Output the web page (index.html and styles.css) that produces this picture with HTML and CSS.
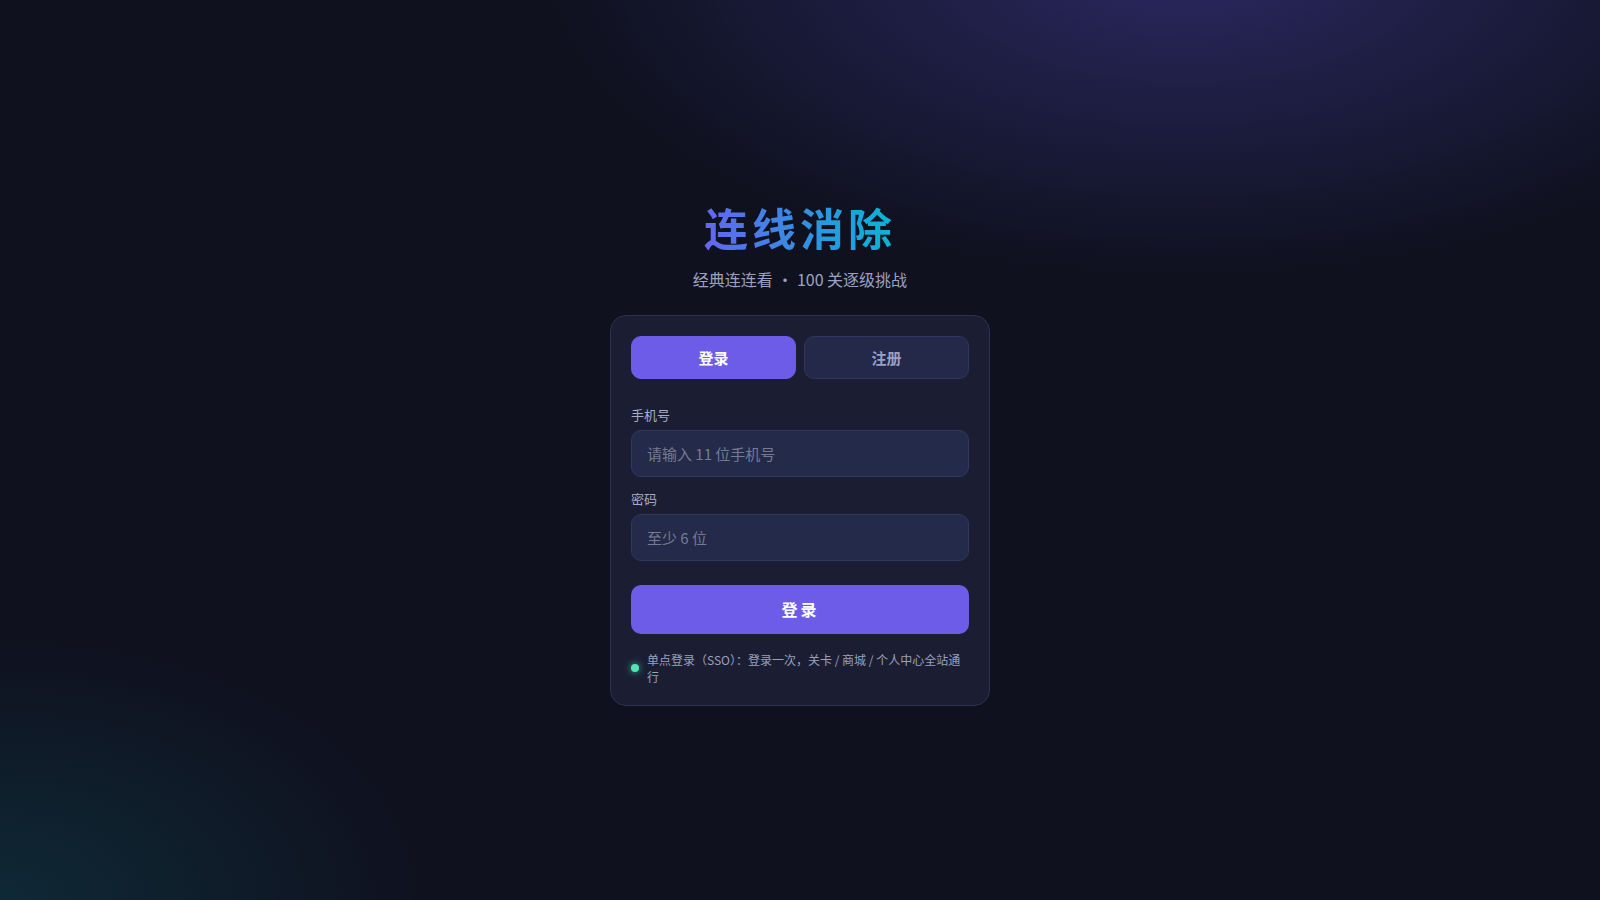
FILE: index.html
```html
<!DOCTYPE html>
<html lang="zh-CN">
<head>
<meta charset="utf-8">
<title>连线消除 - 登录</title>
<link rel="stylesheet" href="styles.css">
</head>
<body>
<main class="page">
  <div class="wrap">
    <h1 class="title">连线消除</h1>
    <p class="subtitle">经典连连看<span class="sep">·</span>100 关逐级挑战</p>
    <section class="card">
      <div class="tabs">
        <button class="tab active">登录</button>
        <button class="tab">注册</button>
      </div>
      <form class="form">
        <label class="field">
          <span class="label">手机号</span>
          <input class="input" type="text" placeholder="请输入 11 位手机号">
        </label>
        <label class="field">
          <span class="label">密码</span>
          <input class="input" type="password" placeholder="至少 6 位">
        </label>
        <button class="submit" type="button">登录</button>
      </form>
      <div class="note">
        <span class="dot"></span>
        <span class="note-text">单点登录（SSO）：登录一次，关卡 / 商城 / 个人中心全站通行</span>
      </div>
    </section>
  </div>
</main>
</body>
</html>
```

FILE: styles.css
```css
* { box-sizing: border-box; }
html, body { margin: 0; padding: 0; }
body {
  font-family: "Noto Sans CJK SC", "Noto Sans", sans-serif;
  background-color: #0f111f;
  background-image:
    radial-gradient(ellipse 640px 320px at 74% -5%, rgba(62, 58, 145, 0.58), rgba(62, 58, 145, 0) 100%),
    radial-gradient(ellipse 420px 260px at 0% 100%, rgba(14, 70, 80, 0.45), rgba(14, 70, 80, 0) 100%);
  color: #e5e7f5;
  min-height: 100vh;
}
.page {
  min-height: 100vh;
  display: flex;
  align-items: center;
  justify-content: center;
}
.wrap {
  display: flex;
  flex-direction: column;
  align-items: center;
  padding-top: 6px;
}
.title {
  margin: 0;
  font-size: 44px;
  line-height: 52px;
  font-weight: 700;
  letter-spacing: 4px;
  background: linear-gradient(90deg, #6366f1 0%, #06b6d4 100%);
  -webkit-background-clip: text;
  background-clip: text;
  color: transparent;
}
.subtitle {
  margin: 14px 0 0;
  font-size: 16px;
  line-height: 24px;
  color: #9ca1c2;
}
.sep { margin: 0 4px; }
.card {
  margin-top: 24px;
  width: 380px;
  padding: 20px;
  background: #1b1e33;
  border: 1px solid #2c3155;
  border-radius: 16px;
}
.tabs {
  display: grid;
  grid-template-columns: 1fr 1fr;
  gap: 8px;
}
.tab {
  height: 43px;
  border-radius: 10px;
  border: 1px solid #30365c;
  background: #242949;
  color: #9aa0c4;
  font-family: inherit;
  font-size: 15px;
  font-weight: 700;
  cursor: pointer;
}
.tab.active {
  background: #6c5ce7;
  border-color: #6c5ce7;
  color: #ffffff;
}
.form {
  display: flex;
  flex-direction: column;
  margin-top: 27px;
}
.field {
  display: flex;
  flex-direction: column;
  gap: 6px;
  margin-bottom: 13px;
}
.label {
  font-size: 13px;
  line-height: 18px;
  color: #a6abc9;
}
.input {
  height: 47px;
  border-radius: 10px;
  border: 1px solid #32385f;
  background: #242a4a;
  padding: 0 15px;
  font-family: inherit;
  font-size: 15px;
  color: #e5e7f5;
  outline: none;
}
.input::placeholder { color: #767a90; }
.submit {
  margin-top: 11px;
  height: 49px;
  border: none;
  border-radius: 10px;
  background: #6c5ce7;
  color: #ffffff;
  font-family: inherit;
  font-size: 16px;
  font-weight: 700;
  letter-spacing: 3px;
  padding-left: 7px;
  cursor: pointer;
}
.note {
  margin-top: 17px;
  display: flex;
  align-items: center;
  gap: 8px;
}
.dot {
  flex: none;
  width: 8px;
  height: 8px;
  border-radius: 50%;
  background: #4fe6b4;
  box-shadow: 0 0 7px rgba(79, 230, 180, 0.75);
}
.note-text {
  font-size: 12px;
  line-height: 17px;
  color: #9aa0bd;
}
```
